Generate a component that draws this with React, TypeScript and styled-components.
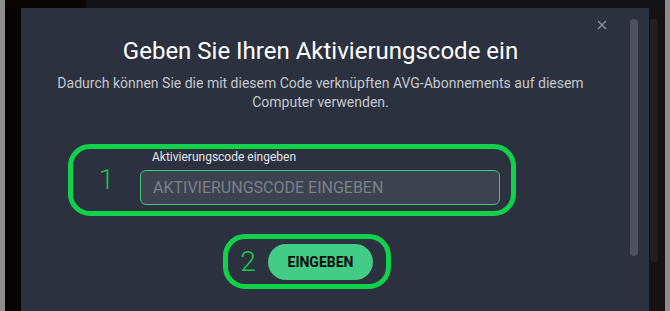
import styled, { createGlobalStyle } from 'styled-components';

const GlobalStyle = createGlobalStyle`
	html, body {
		margin: 0;
		padding: 0;
		background: #8c8c8c;
	}
	* {
		box-sizing: border-box;
	}
`;

const Page = styled.div`
	display: flex;
	height: 311px;
	padding: 0 5px;
	background: #8c8c8c;
	overflow: hidden;
	font-family: Roboto, 'Liberation Sans', sans-serif;
`;

const Backdrop = styled.div`
	flex: 1;
	display: flex;
	align-items: flex-start;
	padding: 8px 0 0 16px;
	background:
		linear-gradient(to right, #0a0606 81px, #131215 81px) top / 100% 8px no-repeat,
		#050303;
`;

const Dialog = styled.section`
	position: relative;
	width: 628px;
	height: 303px;
	display: flex;
	flex-direction: column;
	padding: 28px 29px 0 0;
	background: #2b313e;
`;

const OuterTrack = styled.div`
	width: 16px;
	height: 303px;
	background: #151213;
	padding: 11px 7px 0 1px;
`;

const OuterThumb = styled.div`
	height: 243px;
	border-radius: 4px;
	background: #221e1f;
`;

const CloseButton = styled.button`
	position: absolute;
	top: 12px;
	right: 42px;
	width: 10px;
	height: 10px;
	padding: 0;
	border: 0;
	background: none;
	display: flex;
	cursor: pointer;
`;

const ScrollThumb = styled.div`
	position: absolute;
	top: 11px;
	right: 11px;
	width: 8px;
	height: 237px;
	border-radius: 4px;
	background: #4b515d;
`;

const Title = styled.h2`
	margin: 0;
	text-align: center;
	font-size: 24px;
	line-height: 30px;
	font-weight: 400;
	color: #ffffff;
`;

const Subtitle = styled.p`
	margin: 8px auto 0;
	max-width: 560px;
	text-align: center;
	font-size: 14px;
	line-height: 19px;
	color: #c4c8cf;
`;

const Form = styled.div`
	display: flex;
	flex-direction: column;
	align-items: flex-start;
	gap: 18px;
	margin-top: 32px;
	padding-left: 47px;
`;

const Marker = styled.div<{ $offset?: number }>`
	display: flex;
	align-items: center;
	margin-left: ${(p) => p.$offset ?? 0}px;
	border: 5px solid #0fd14a;
	border-radius: 22px;
`;

const StepNumber = styled.span<{ $width: number }>`
	width: ${(p) => p.$width}px;
	text-align: center;
	font-size: 28px;
	line-height: 30px;
	font-weight: 300;
	color: #17c94b;
`;

const Field = styled.label`
	display: flex;
	flex-direction: column;
	gap: 6px;
	width: 360px;
	padding: 1px 0 6px;
	margin-right: 11px;
`;

const FieldLabel = styled.span`
	padding-left: 12px;
	font-size: 12px;
	line-height: 14px;
	font-weight: 400;
	color: #e3e6ea;
`;

const CodeInput = styled.input`
	height: 35px;
	padding: 0 12px;
	border: 1px solid #3fc77d;
	border-radius: 6px;
	background: #3c4250;
	font-family: inherit;
	font-size: 16px;
	color: #ffffff;
	outline: none;

	&::placeholder {
		color: #7b8089;
	}
`;

const SubmitButton = styled.button`
	height: 36px;
	width: 105px;
	margin: 5px 13px 4px 0;
	border: 0;
	border-radius: 18px;
	background: #43cc85;
	font-family: inherit;
	font-size: 14px;
	font-weight: 700;
	color: #0b0b0b;
	cursor: pointer;
`;

const App = () => {
	return (
		<>
			<GlobalStyle />
			<Page>
				<Backdrop>
					<Dialog>
						<CloseButton aria-label="Schließen">
							<svg width="10" height="10" viewBox="0 0 10 10">
								<path d="M1 1L9 9M9 1L1 9" stroke="#8e95a0" strokeWidth="1.2" />
							</svg>
						</CloseButton>
						<ScrollThumb />
						<Title>Geben Sie Ihren Aktivierungscode ein</Title>
						<Subtitle>
							Dadurch können Sie die mit diesem Code verknüpften AVG-Abonnements auf diesem
							Computer verwenden.
						</Subtitle>
						<Form>
							<Marker>
								<StepNumber $width={67}>1</StepNumber>
								<Field>
									<FieldLabel>Aktivierungscode eingeben</FieldLabel>
									<CodeInput placeholder="AKTIVIERUNGSCODE EINGEBEN" />
								</Field>
							</Marker>
							<Marker $offset={155}>
								<StepNumber $width={40}>2</StepNumber>
								<SubmitButton>EINGEBEN</SubmitButton>
							</Marker>
						</Form>
					</Dialog>
					<OuterTrack>
						<OuterThumb />
					</OuterTrack>
				</Backdrop>
			</Page>
		</>
	);
};

export default App;
